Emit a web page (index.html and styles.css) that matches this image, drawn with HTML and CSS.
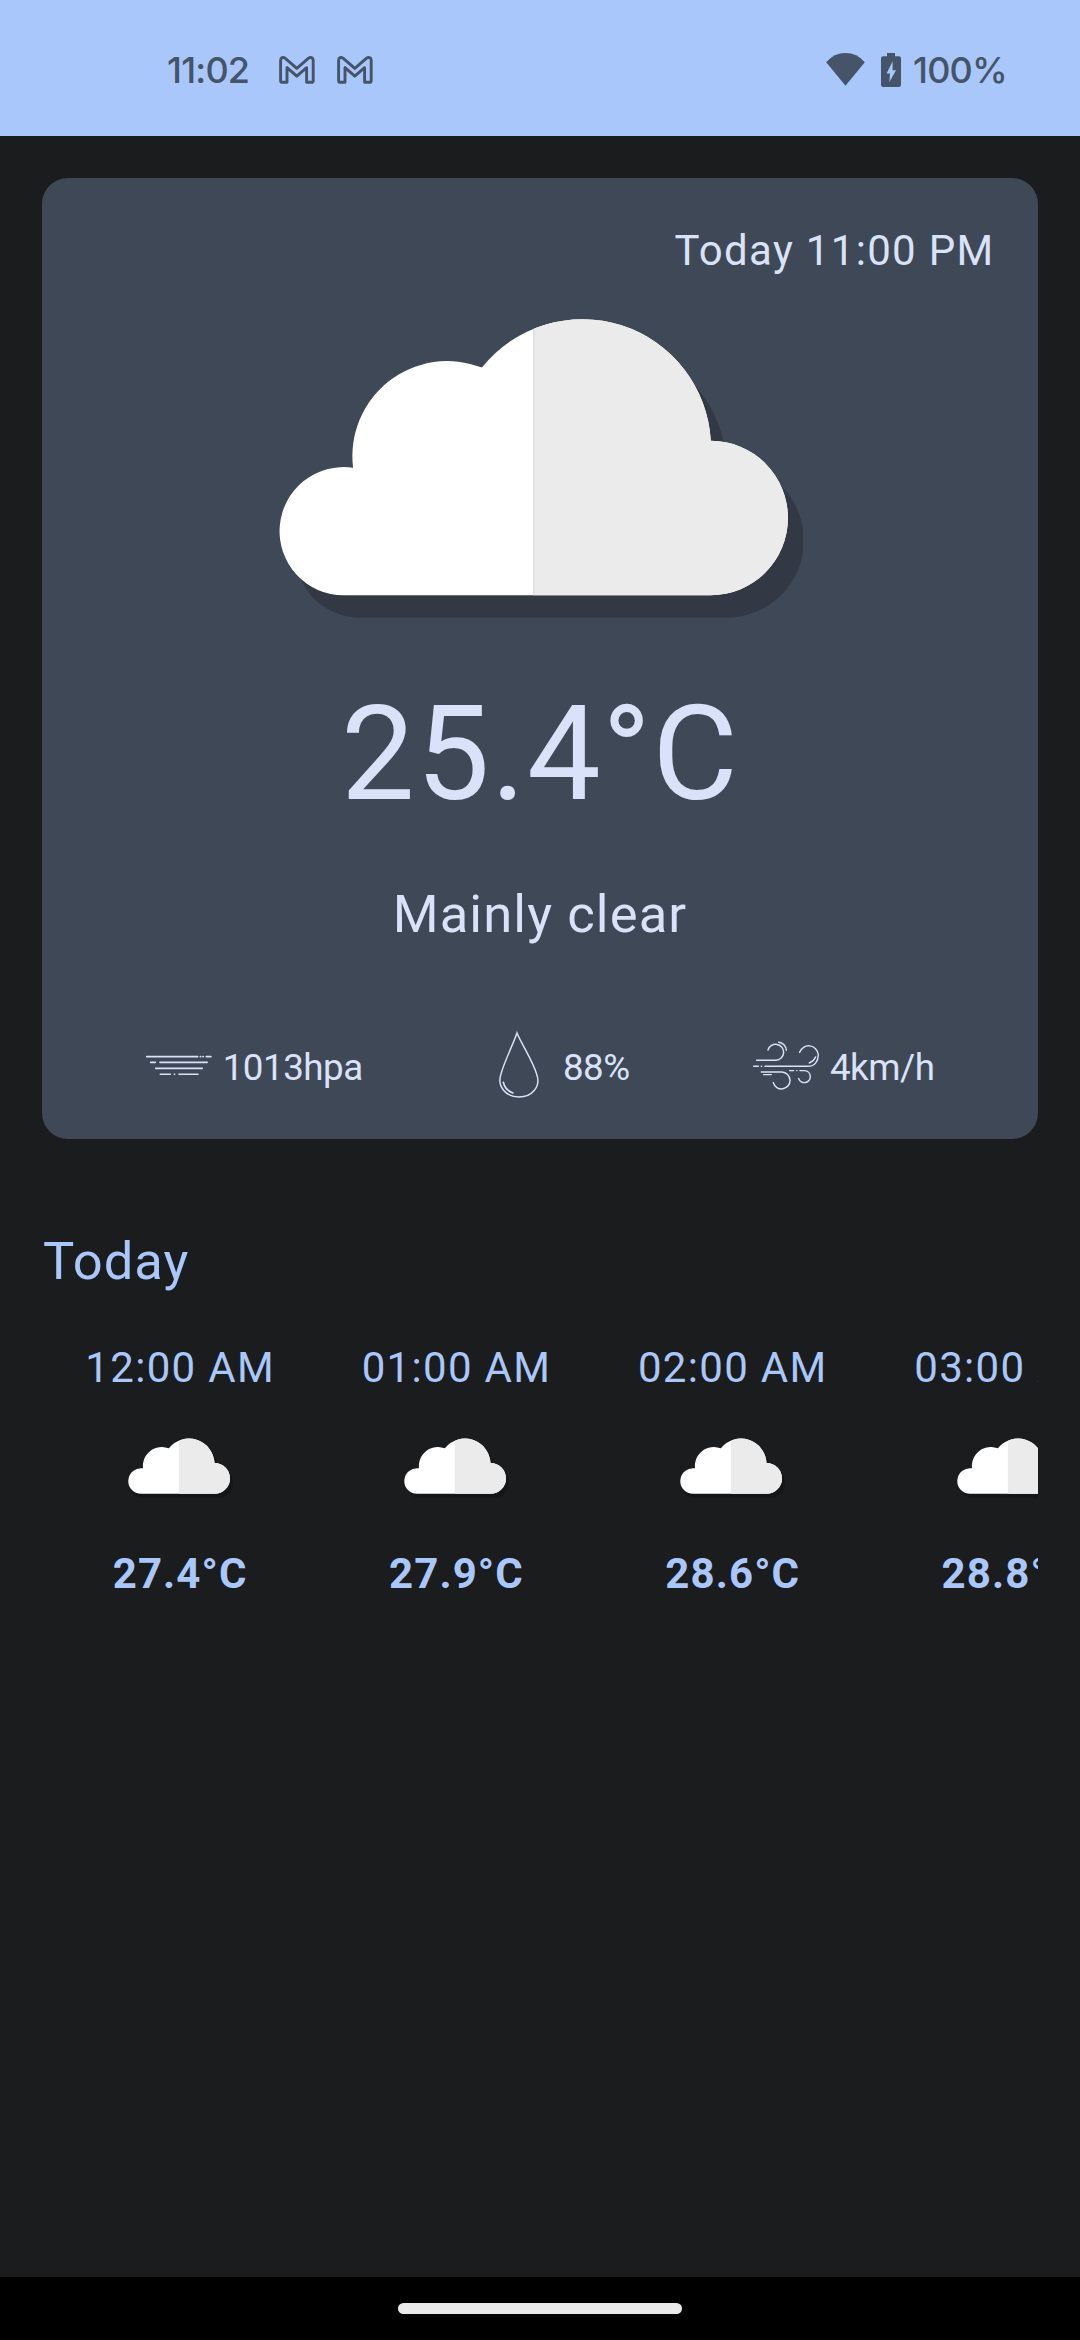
FILE: index.html
```html
<!DOCTYPE html>
<html lang="en">
<head>
<meta charset="utf-8">
<title>Weather</title>
<link rel="stylesheet" href="styles.css">
</head>
<body>
<svg class="defs" aria-hidden="true">
  <defs>
    <path id="cloud-outline" d="M343 595.3A64.1 64.1 0 1 1 352.6 467.8A95 95 0 0 1 481.4 367.6A128.6 128.6 0 0 1 710.3 440.7A77.3 77.3 0 0 1 710 595.3Z"/>
    <clipPath id="right-half"><rect x="533.2" y="300" width="270" height="300"/></clipPath>
  </defs>
  <symbol id="cloud" viewBox="277.5 317 525 303">
    <use href="#cloud-outline" fill="#000" fill-opacity=".2" transform="translate(16 22.4)"/>
    <use href="#cloud-outline" fill="#fff"/>
    <g clip-path="url(#right-half)"><use href="#cloud-outline" fill="#ebebeb"/></g>
    <path d="M533.4 329.5V595.3" stroke="#cfcfcf" stroke-width=".9"/>
  </symbol>
  <symbol id="mail" viewBox="0 0 36 28">
    <path d="M1.6 24.4V4.2C1.6 1.7 4 .7 6 2.2L17.8 12.4L29.6 2.2C31.6 .7 34.2 1.7 34.2 4.2V24.4Q34.2 26.3 32.5 26.3H27.6V11.6L17.8 20.2L8 11.6V26.3H3.3Q1.6 26.3 1.6 24.4Z" fill="none" stroke="currentColor" stroke-width="2.9" stroke-linejoin="round"/>
  </symbol>
</svg>

<header class="status">
  <span class="clock">11:02</span>
  <svg class="mail"><use href="#mail"/></svg>
  <svg class="mail"><use href="#mail"/></svg>
  <svg class="wifi" viewBox="0 0 39 33"><path d="M19.5 32.7L.2 9.3Q8 0 19.5 0T38.8 9.3Z" fill="currentColor"/></svg>
  <svg class="battery" viewBox="0 0 20 34"><path fill="currentColor" fill-rule="evenodd" d="M6 0H14V3.3H17.8Q20 3.3 20 5.5V31.8Q20 34 17.8 34H2.2Q0 34 0 31.8V5.5Q0 3.3 2.2 3.3H6ZM11.6 8.2L5.6 20.4H9L8.4 29L15 17.2H11.6Z"/></svg>
  <span class="percent">100%</span>
</header>

<main class="content">
  <section class="card">
    <p class="date">Today 11:00 PM</p>
    <svg class="cloud-large"><use href="#cloud"/></svg>
    <p class="temperature">25.4°C</p>
    <p class="condition">Mainly clear</p>
    <div class="stats">
      <div class="stat">
        <svg class="stat-icon" viewBox="48 67 197 197"><path stroke-width="5" d="M50 141H203M211 141H212M219 141H220M229 141H243M62 158H76M90 158H232M77 176H217M91 194H121M133 194H134M147 194H204"/></svg>
        <span class="stat-value">1013hpa</span>
      </div>
      <div class="stat">
        <svg class="stat-icon" viewBox="48 66 197 197"><path stroke-width="4.4" d="M141 69C132 97 103 155 93 192C80 230 108 261 147 261S214 230 200 192C190 155 152 97 141 69Z"/><path stroke-width="5" d="M100 217C104 233 114 244 129 249"/></svg>
        <span class="stat-value">88%</span>
      </div>
      <div class="stat">
        <svg class="stat-icon" viewBox="66 67 197 197"><path stroke-width="4.4" d="M77 152H135A24 24 0 1 0 111 121M143 98A25 25 0 0 1 166 122M68 170H82M91 170H92M102 170H231C252 170 262 154 262 135A29 30 0 0 0 206 128M254 142Q248 155 235 160M91 187H153A25.5 25.5 0 1 1 127 219M98 195H121M176 183H188M197 183H198M207 183H221A18 18 0 1 1 203 207"/></svg>
        <span class="stat-value">4km/h</span>
      </div>
    </div>
  </section>

  <h2 class="heading">Today</h2>
  <div class="hours">
    <div class="hour"><span>12:00 AM</span><svg class="cloud-small"><use href="#cloud"/></svg><strong>27.4°C</strong></div>
    <div class="hour"><span>01:00 AM</span><svg class="cloud-small"><use href="#cloud"/></svg><strong>27.9°C</strong></div>
    <div class="hour"><span>02:00 AM</span><svg class="cloud-small"><use href="#cloud"/></svg><strong>28.6°C</strong></div>
    <div class="hour"><span>03:00 AM</span><svg class="cloud-small"><use href="#cloud"/></svg><strong>28.8°C</strong></div>
  </div>
</main>

<footer class="navbar"><div class="pill"></div></footer>
</body>
</html>
```
FILE: styles.css
```css
* { box-sizing: border-box; }

body {
  margin: 0;
  height: 2340px;
  display: flex;
  flex-direction: column;
  overflow: hidden;
  background: #1b1c1e;
  font-family: Roboto, sans-serif;
  font-size: 42px;
  line-height: 63px;
  letter-spacing: 1.3125px;
}

p, h2 { margin: 0; font-weight: 400; }
svg { display: block; flex: none; }
.defs { position: absolute; width: 0; height: 0; }

.status {
  flex: none;
  height: 136px;
  display: flex;
  align-items: flex-start;
  padding: 53px 0 0 167px;
  background: #a9c7fa;
  color: #455468;
  font-family: Inter, sans-serif;
  font-size: 36px;
  font-weight: 500;
  line-height: 34px;
  letter-spacing: -0.8px;
}
.clock { width: 112px; }
.mail { width: 36px; height: 28px; margin: 3px 22px 0 0; }
.wifi { width: 39px; height: 33px; margin-left: 431px; }
.battery { width: 20px; height: 34px; margin: 0 12px 0 16px; }

.content { flex: 1; padding: 42px 42px 0; }

.card {
  height: 961px;
  padding: 41px 42px 0;
  display: flex;
  flex-direction: column;
  align-items: center;
  border-radius: 26px;
  background: #3f4856;
  color: #dae2f9;
}
.date { align-self: flex-end; margin-right: 1.5px; }
.cloud-large { width: 525px; height: 303px; margin-top: 35px; }
.temperature { margin-top: 59px; font-size: 131.25px; line-height: 150px; }
.condition { margin-top: 54px; font-size: 52.5px; letter-spacing: 1.1px; }
.stats {
  align-self: stretch;
  display: flex;
  justify-content: space-around;
  margin-top: 85px;
  font-size: 36.75px;
  letter-spacing: -0.5px;
}
.stat { display: flex; align-items: center; gap: 11.5px; }
.stat-value { padding-top: 5px; }
.stat-icon {
  width: 65.6px;
  height: 65.6px;
  overflow: visible;
  fill: none;
  stroke: currentColor;
  stroke-linecap: round;
}

.heading {
  margin-top: 91px;
  padding-left: 1px;
  color: #a9c7fa;
  font-size: 52.5px;
  letter-spacing: 1px;
}
.hours { display: flex; margin-top: 43px; overflow: hidden; color: #a9c7fa; }
.hour {
  flex: none;
  width: 276.3px;
  display: flex;
  flex-direction: column;
  align-items: center;
}
.hour strong { letter-spacing: 1.1px; }
.cloud-small { width: 105px; height: 61px; margin: 39px 0 43px; }

.navbar {
  flex: none;
  height: 63px;
  padding-top: 26px;
  background: #000;
}
.pill {
  width: 284px;
  height: 11px;
  margin: 0 auto;
  border-radius: 6px;
  background: #ebebeb;
}
```
